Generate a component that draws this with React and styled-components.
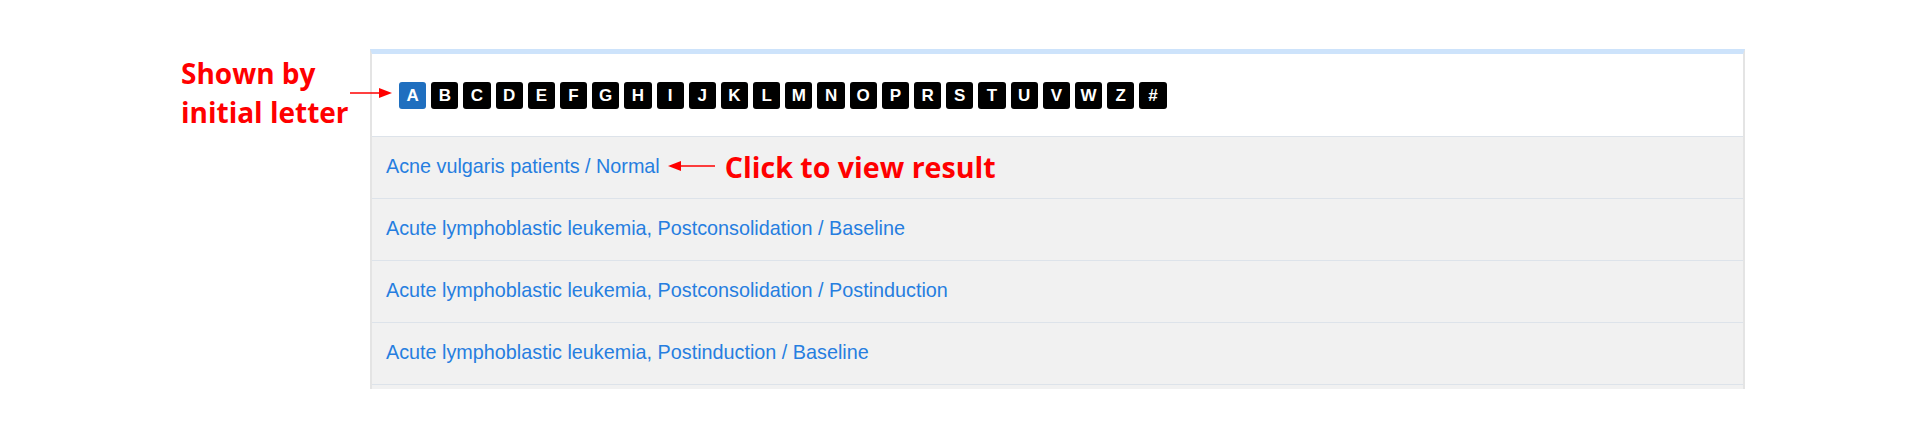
import React from "react";
import styled, { createGlobalStyle } from "styled-components";

const Global = createGlobalStyle`
  html, body { margin: 0; padding: 0; background: #ffffff; }
  body { font-family: "Liberation Sans", Arial, sans-serif; }
`;

const Stage = styled.div`
  display: flex;
  align-items: flex-start;
  padding: 49px 0 0 181px;
  height: 440px;
  box-sizing: border-box;
`;

const Note = styled.div`
  position: relative;
  width: 189px;
  flex: none;
  padding-top: 5px;
  font-family: "Open Sans", "Noto Sans", "Noto Sans CJK SC", sans-serif;
  font-weight: 700;
  font-size: 28px;
  line-height: 39px;
  color: #ff0000;
  white-space: nowrap;
`;

const NoteArrow = styled.svg`
  position: absolute;
  left: 169px;
  top: 38px;
`;

const Panel = styled.div`
  width: 1375px;
  height: 340px;
  box-sizing: border-box;
  overflow: hidden;
  background: #f1f1f1;
  border-top: 5px solid #cde3fb;
  border-left: 2px solid #e4e4e4;
  border-right: 2px solid #e4e4e4;
  flex: none;
`;

const LetterBar = styled.div`
  display: flex;
  align-items: center;
  gap: 5px;
  height: 82px;
  padding-left: 27px;
  background: #ffffff;
`;

const Letter = styled.span`
  display: flex;
  align-items: center;
  justify-content: center;
  width: 27.2px;
  height: 27px;
  border-radius: 3px;
  background: ${(p) => (p.$active ? "#1f6fbf" : "#000000")};
  color: #ffffff;
  font-family: "Liberation Sans", Arial, sans-serif;
  font-weight: 700;
  font-size: 17px;
  line-height: 1;
`;

const Row = styled.div`
  display: flex;
  align-items: center;
  box-sizing: border-box;
  height: 62px;
  border-top: 1px solid #dde3ea;
  background: #f1f1f1;
  padding: 0 0 3px 14px;

  &:last-child {
    height: 63px;
    border-bottom: 1px solid #dde3ea;
  }
`;

const Link = styled.a`
  font-family: "Liberation Sans", Arial, sans-serif;
  font-size: 19.8px;
  color: #267ee0;
  text-decoration: none;
  white-space: nowrap;
`;

const RowArrow = styled.svg`
  margin-left: 8px;
  flex: none;
`;

const Callout = styled.span`
  margin-left: 10px;
  font-family: "Open Sans", "Noto Sans", "Noto Sans CJK SC", sans-serif;
  font-weight: 700;
  font-size: 28.6px;
  color: #ff0000;
  white-space: nowrap;
`;

const letters = "A B C D E F G H I J K L M N O P R S T U V W Z #".split(" ");

const rows = [
  "Acne vulgaris patients / Normal",
  "Acute lymphoblastic leukemia, Postconsolidation / Baseline",
  "Acute lymphoblastic leukemia, Postconsolidation / Postinduction",
  "Acute lymphoblastic leukemia, Postinduction / Baseline",
];

function ArrowRight() {
  return (
    <NoteArrow width="42" height="12" viewBox="0 0 42 12">
      <line x1="0" y1="6" x2="30" y2="6" stroke="#ff0000" strokeWidth="1.5" />
      <polygon points="29,1 42,6 29,11" fill="#ff0000" />
    </NoteArrow>
  );
}

function ArrowLeft() {
  return (
    <RowArrow width="47" height="12" viewBox="0 0 47 12">
      <polygon points="0,6 13,1 13,11" fill="#ff0000" />
      <line x1="12" y1="6" x2="47" y2="6" stroke="#ff0000" strokeWidth="1.5" />
    </RowArrow>
  );
}

export default function App() {
  return (
    <>
      <Global />
      <Stage>
        <Note>
          Shown by
          <br />
          initial letter
          <ArrowRight />
        </Note>
        <Panel>
          <LetterBar>
            {letters.map((l, i) => (
              <Letter key={l} $active={i === 0}>
                {l}
              </Letter>
            ))}
          </LetterBar>
          {rows.map((r, i) => (
            <Row key={r}>
              <Link href="#">{r}</Link>
              {i === 0 && (
                <>
                  <ArrowLeft />
                  <Callout>Click to view result</Callout>
                </>
              )}
            </Row>
          ))}
        </Panel>
      </Stage>
    </>
  );
}
